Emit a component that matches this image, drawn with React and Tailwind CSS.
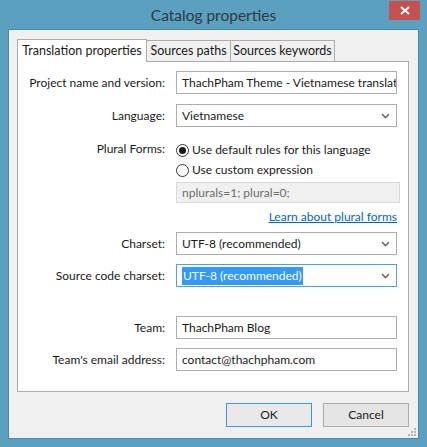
function Chevron() {
  return (
    <svg width="9" height="6" viewBox="0 0 9 6" className="shrink-0">
      <path d="M1 1 L4.5 4.5 L8 1" fill="none" stroke="#6d6d6d" strokeWidth="1.6" />
    </svg>
  );
}

function Field({ label, children, className = "" }) {
  return (
    <div className={`flex items-center ${className}`}>
      <div className="w-[148px] shrink-0 pr-[1px] text-right">{label}</div>
      <div className="ml-[10px] w-[221px]">{children}</div>
    </div>
  );
}

function TextBox({ value }) {
  return (
    <div className="flex h-[23px] items-center overflow-hidden whitespace-nowrap border border-[#abadb3] bg-white pl-[5px]">
      {value}
    </div>
  );
}

function Select({ value, focused }) {
  return (
    <div
      className={`flex h-[23px] items-center justify-between border bg-white pl-[5px] pr-[6px] ${
        focused ? "border-[#569de5]" : "border-[#acacac]"
      }`}
    >
      {focused ? (
        <span className="bg-[#3399ff] px-[1px] text-white">{value}</span>
      ) : (
        <span>{value}</span>
      )}
      <Chevron />
    </div>
  );
}

function Radio({ checked, label }) {
  return (
    <div className="flex h-[20px] items-center gap-[3px]">
      <span className="flex h-[13px] w-[13px] items-center justify-center rounded-full border border-[#333] bg-white">
        {checked && <span className="h-[7px] w-[7px] rounded-full bg-[#1a1a1a]" />}
      </span>
      <span>{label}</span>
    </div>
  );
}

export default function App() {
  return (
    <div
      className="flex h-[447px] w-[427px] flex-col bg-[#5ba0bf] text-[12px] leading-[18px] text-[#1a1a1a]"
      style={{ fontFamily: 'Lato, "Noto Sans", sans-serif' }}
    >
      <div className="relative flex h-[30px] items-center justify-center">
        <span className="text-[15.5px] text-[#2b3a42]">Catalog properties</span>
        <div className="absolute right-[7px] top-[1px] flex h-[19px] w-[31px] items-center justify-center bg-[#c75050]">
          <svg width="10" height="9" viewBox="0 0 10 9">
            <path d="M1 1 L9 8 M9 1 L1 8" stroke="white" strokeWidth="2" />
          </svg>
        </div>
      </div>

      <div className="mx-[8px] mb-[8px] flex flex-1 flex-col border border-[#4a8aa8] bg-[#f0f0f0] pl-[8px] pt-[9px]">
        <div className="flex h-[22px] items-end">
          <div className="relative z-10 -mb-px flex h-[23px] w-[130px] items-center justify-center border border-b-0 border-[#acacac] bg-white text-[12.5px]">
            Translation properties
          </div>
          <div className="flex h-[21px] w-[84px] items-center justify-center border border-l-0 border-b-0 border-[#acacac] bg-[#f0f0f0] text-[12.5px]">
            Sources paths
          </div>
          <div className="flex h-[21px] w-[104px] items-center justify-center border border-l-0 border-b-0 border-[#acacac] bg-[#f0f0f0] text-[12.5px]">
            Sources keywords
          </div>
        </div>

        <div className="flex h-[331px] w-[392px] flex-col border border-[#acacac] bg-white">
          <Field label="Project name and version:" className="mt-[9px]">
            <TextBox value="ThachPham Theme - Vietnamese translation" />
          </Field>
          <Field label="Language:" className="mt-[10px]">
            <Select value="Vietnamese" />
          </Field>
          <div className="mt-[13px] flex">
            <div className="w-[148px] shrink-0 pr-[1px] text-right">Plural Forms:</div>
            <div className="ml-[10px] flex w-[224px] flex-col">
              <Radio checked label="Use default rules for this language" />
              <Radio label="Use custom expression" />
              <div className="mt-[2px] flex h-[21px] items-center border border-[#d9d9d9] bg-[#f0f0f0] pl-[5px] text-[#6d6d6d]">
                nplurals=1; plural=0;
              </div>
              <div className="mr-[3px] mt-[5px] text-right text-[#0066cc] underline">
                Learn about plural forms
              </div>
            </div>
          </div>
          <Field label="Charset:" className="mt-[6px]">
            <Select value="UTF-8 (recommended)" />
          </Field>
          <Field label="Source code charset:" className="mt-[9px]">
            <Select value="UTF-8 (recommended)" focused />
          </Field>
          <Field label="Team:" className="mt-[29px]">
            <TextBox value="ThachPham Blog" />
          </Field>
          <Field label="Team's email address:" className="mt-[9px]">
            <TextBox value="contact@thachpham.com" />
          </Field>
        </div>

        <div className="mt-[11px] flex w-[392px] justify-end gap-[11px]">
          <div className="flex h-[24px] w-[86px] items-center justify-center border border-[#3c99e6] bg-[#e9e9e9]">
            OK
          </div>
          <div className="flex h-[24px] w-[86px] items-center justify-center border border-[#acacac] bg-[#e5e5e5]">
            Cancel
          </div>
        </div>
        <div className="flex flex-1 items-end justify-end pb-[1px] pr-[1px]">
          <svg width="10" height="10" viewBox="0 0 10 10">
            <rect x="7" y="1" width="2" height="2" fill="#b5b5b5" />
            <rect x="4" y="4" width="2" height="2" fill="#b5b5b5" />
            <rect x="7" y="4" width="2" height="2" fill="#b5b5b5" />
            <rect x="1" y="7" width="2" height="2" fill="#b5b5b5" />
            <rect x="4" y="7" width="2" height="2" fill="#b5b5b5" />
            <rect x="7" y="7" width="2" height="2" fill="#b5b5b5" />
          </svg>
        </div>
      </div>
    </div>
  );
}
